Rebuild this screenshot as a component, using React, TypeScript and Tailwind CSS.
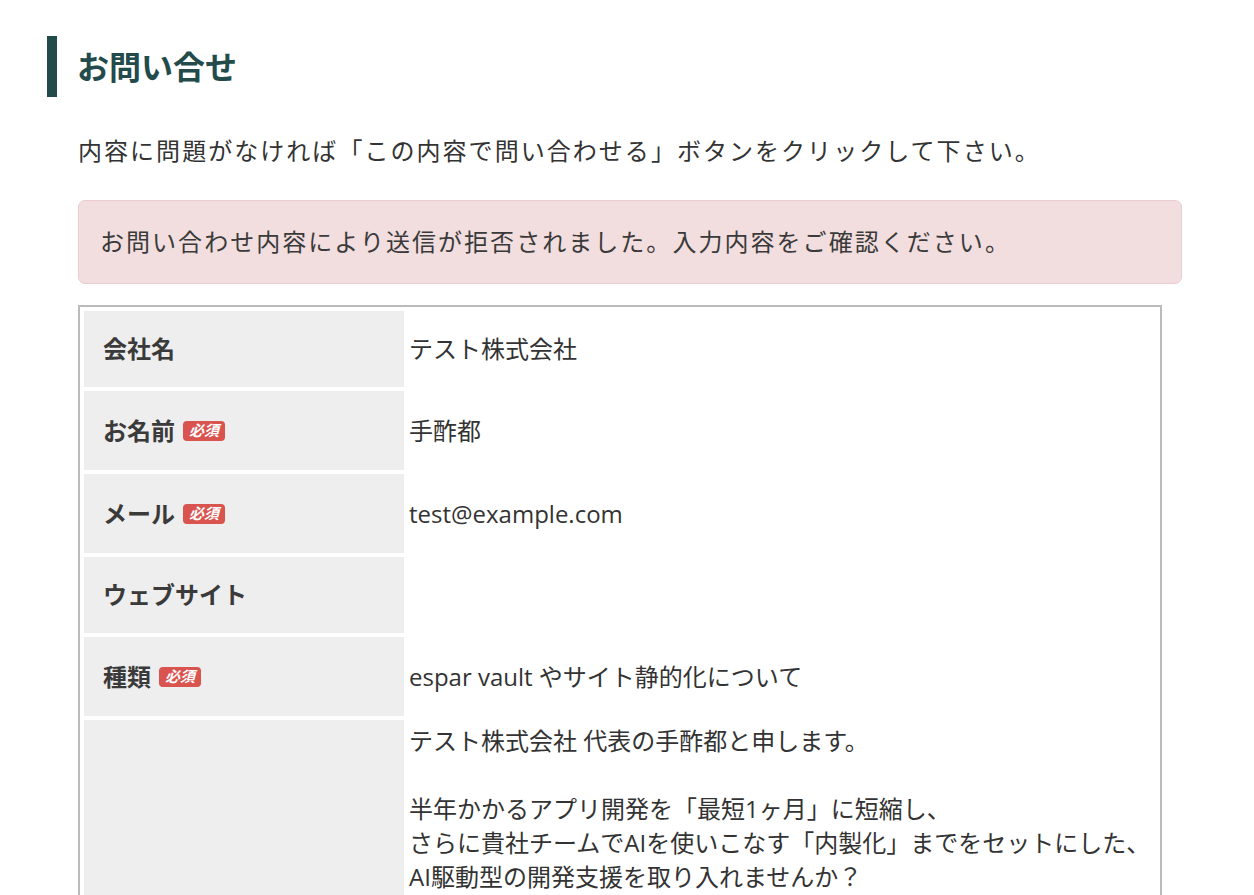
const FONT = "font-['Open_Sans','Noto_Sans_CJK_JP',sans-serif]";

type Row = { label: string; required?: boolean; value: string; long?: boolean };

const ROWS: Row[] = [
  { label: '会社名', value: 'テスト株式会社' },
  { label: 'お名前', required: true, value: '手酢都' },
  { label: 'メール', required: true, value: 'test@example.com' },
  { label: 'ウェブサイト', value: '' },
  { label: '種類', required: true, value: 'espar vault やサイト静的化について' },
  {
    label: 'お問い合わせ内容',
    required: true,
    long: true,
    value: [
      'テスト株式会社 代表の手酢都と申します。',
      '',
      '半年かかるアプリ開発を「最短1ヶ月」に短縮し、',
      'さらに貴社チームでAIを使いこなす「内製化」までをセットにした、',
      'AI駆動型の開発支援を取り入れませんか？',
      '',
      '要件定義から設計・実装・テストまでを',
      'AIエージェントと経験豊富なエンジニアが並走し、',
      'スピードと品質を両立した開発をご提供します。',
      '',
      '開発と並行して、貴社メンバー向けに',
      'AIツールの活用方法や開発フローの勉強会も実施いたします。',
      'プロジェクト終了後も、貴社チームだけで',
      '継続的に改善を回せる体制づくりをお手伝いします。',
      '',
      '現在、無料相談を受け付けております。',
      'ご興味がございましたら、お気軽にご返信ください。',
      '',
      'よろしくお願いいたします。',
    ].join('\n'),
  },
];

function Required() {
  return (
    <span className="inline-flex h-[20px] items-center rounded-[4px] bg-[#d9534f] px-[6px] text-[15px] font-bold italic leading-none text-white">
      必須
    </span>
  );
}

export default function App() {
  return (
    <div className={`min-h-screen bg-white text-[#333] ${FONT}`}>
      <div className="pl-[47px] pr-[72px] pt-[36px]">
        <h1 className="border-l-[10px] border-[#234b4b] pl-[20px] text-[32px] font-bold leading-[61px] text-[#234b4b]">
          お問い合せ
        </h1>

        <div className="pl-[31px]">
          <p className="mt-[36px] text-[24px] leading-[36px] tracking-[0.085em]">
            内容に問題がなければ「この内容で問い合わせる」ボタンをクリックして下さい。
          </p>

          <div className="mt-[31px] rounded-[7px] border border-[#ebccd1] bg-[#f2dede] px-[21px] py-[23px] text-[24px] leading-[36px] tracking-[0.085em] text-[#3a3a3a]">
            お問い合わせ内容により送信が拒否されました。入力内容をご確認ください。
          </div>

          <table className="mt-[21px] w-[1084px] border-separate border-spacing-[4px] border-2 border-[#bbb] text-[24px]">
            <tbody>
              {ROWS.map((row) => (
                <tr key={row.label}>
                  <th className="w-[320px] bg-[#eee] py-[20px] pl-[19px] text-left align-middle font-bold text-[#3a3a3a]">
                    <div className={`flex items-center gap-[8px] ${row.required ? 'h-[39px]' : 'h-[36px]'}`}>
                      <span className="leading-[36px]">{row.label}</span>
                      {row.required && <Required />}
                    </div>
                  </th>
                  <td
                    className={
                      row.long
                        ? 'whitespace-pre-wrap pl-px pt-[4px] align-top leading-[34px]'
                        : 'pl-px align-middle leading-[36px]'
                    }
                  >
                    {row.value}
                  </td>
                </tr>
              ))}
            </tbody>
          </table>
        </div>
      </div>
    </div>
  );
}
